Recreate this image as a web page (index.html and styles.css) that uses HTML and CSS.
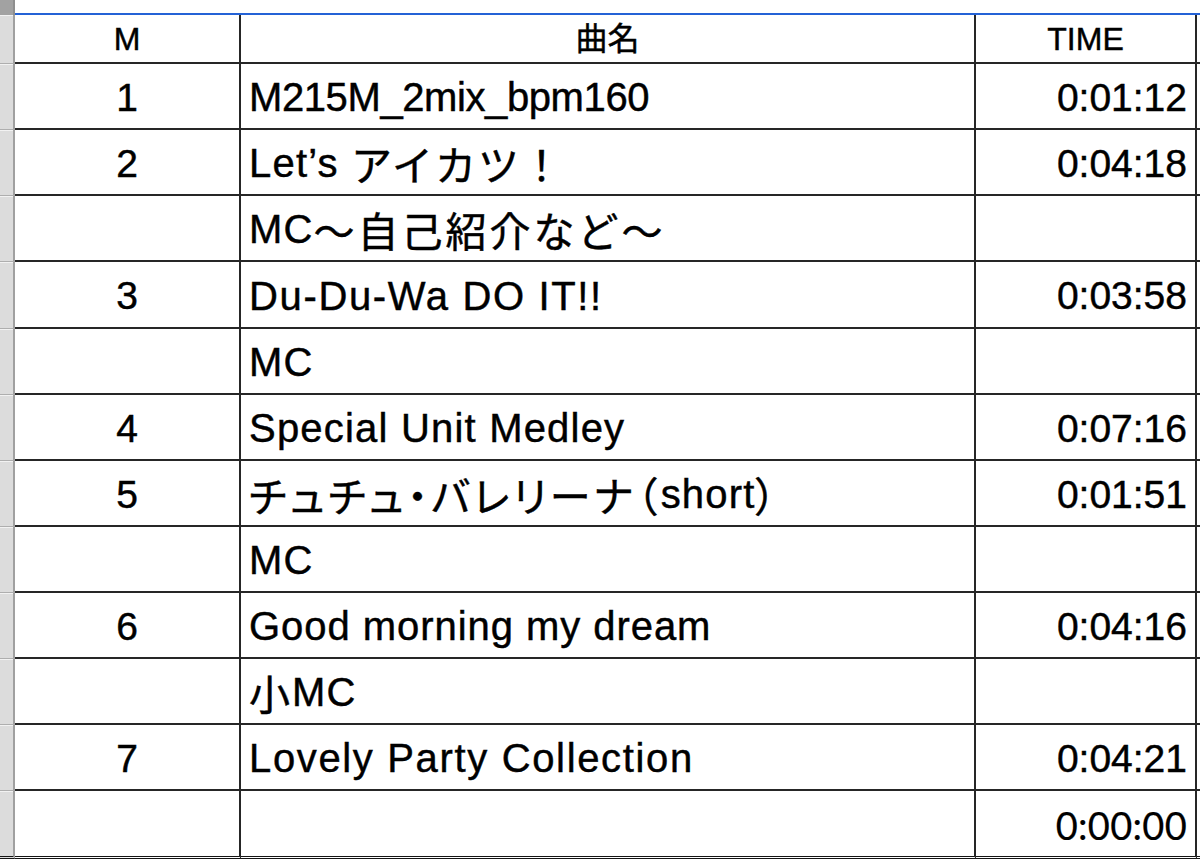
FILE: index.html
```html
<!DOCTYPE html>
<html lang="ja">
<head>
<meta charset="utf-8">
<title>Setlist</title>
<link rel="stylesheet" href="styles.css">
</head>
<body>
<div class="sheet">
  <div class="corner"></div><div class="top"></div><div class="top"></div><div class="top"></div><div class="top"></div>

  <div class="rh"></div><div class="c hd c1">M</div><div class="c hd c2">曲名</div><div class="c hd c3">TIME</div><div class="c c4"></div>

  <div class="rh"></div><div class="c c1 num">1</div><div class="c c2 name tight">M215M_2mix_bpm160</div><div class="c c3 time">0:01:12</div><div class="c c4"></div>
  <div class="rh"></div><div class="c c1 num">2</div><div class="c c2 name">Let’s <span class="ja">アイカツ！</span></div><div class="c c3 time">0:04:18</div><div class="c c4"></div>
  <div class="rh"></div><div class="c c1 num"></div><div class="c c2 name">MC<span class="ja wide">〜自己紹介など〜</span></div><div class="c c3 time"></div><div class="c c4"></div>
  <div class="rh"></div><div class="c c1 num">3</div><div class="c c2 name loose">Du-Du-Wa DO IT!!</div><div class="c c3 time">0:03:58</div><div class="c c4"></div>
  <div class="rh"></div><div class="c c1 num"></div><div class="c c2 name">MC</div><div class="c c3 time"></div><div class="c c4"></div>
  <div class="rh"></div><div class="c c1 num">4</div><div class="c c2 name">Special Unit Medley</div><div class="c c3 time">0:07:16</div><div class="c c4"></div>
  <div class="rh"></div><div class="c c1 num">5</div><div class="c c2 name"><span class="ja palt">チュチュ・バレリーナ（</span>short<span class="ja palt">）</span></div><div class="c c3 time">0:01:51</div><div class="c c4"></div>
  <div class="rh"></div><div class="c c1 num"></div><div class="c c2 name">MC</div><div class="c c3 time"></div><div class="c c4"></div>
  <div class="rh"></div><div class="c c1 num">6</div><div class="c c2 name snug">Good morning my dream</div><div class="c c3 time">0:04:16</div><div class="c c4"></div>
  <div class="rh"></div><div class="c c1 num"></div><div class="c c2 name"><span class="ja">小</span>MC</div><div class="c c3 time"></div><div class="c c4"></div>
  <div class="rh"></div><div class="c c1 num">7</div><div class="c c2 name loose">Lovely Party Collection</div><div class="c c3 time">0:04:21</div><div class="c c4"></div>
  <div class="rh last"></div><div class="c c1 num last"></div><div class="c c2 name last"></div><div class="c c3 time total last">0:00:00</div><div class="c c4 last"></div>
</div>
</body>
</html>
```

FILE: styles.css
```css
html, body {
  margin: 0;
  padding: 0;
  background: #ffffff;
}

body {
  width: 1200px;
  height: 860px;
  overflow: hidden;
  font-family: "Liberation Sans", "Noto Sans CJK JP", sans-serif;
  color: #000;
}

.sheet {
  display: grid;
  grid-template-columns: 15px 226px 735px 221px 3px;
  grid-template-rows: 15px 49px 66px 66px 66px 67px repeat(7, 66px) 68px;
  background: #ffffff;
}

.sheet > div {
  box-sizing: border-box;
}

.corner {
  background: #a2a2a2;
  border-right: 2px solid #8e8e8e;
}

.top {
  background: #ffffff;
  border-bottom: 2px solid #2462d6;
}

.rh {
  background: #dcdcdc;
  border-right: 2px solid #a0a0a0;
  border-bottom: 1px solid #aeaeae;
  box-shadow: inset 0 1px 0 #f2f2f2;
}

.c {
  display: flex;
  align-items: center;
  border-bottom: 2px solid #262626;
  line-height: 1;
  white-space: pre;
  overflow: hidden;
  -webkit-text-stroke: 0.45px #000;
}

.c1, .c2, .c3 {
  border-right: 2px solid #262626;
}

.c1 {
  justify-content: center;
}

.c2 {
  justify-content: flex-start;
  padding-left: 8px;
}

.c3 {
  justify-content: flex-end;
  padding-right: 8px;
}

.hd {
  font-size: 32px;
  padding-top: 1px;
}

.hd.c2 {
  justify-content: center;
  padding-left: 0;
  font-size: 32px;
}

.hd.c3 {
  justify-content: center;
  padding-right: 0;
}

.num {
  font-size: 39px;
  padding-top: 2px;
}

.name {
  font-size: 40px;
  padding-top: 2px;
  letter-spacing: 1.2px;
}

.name.tight {
  letter-spacing: -0.4px;
}

.name.snug {
  letter-spacing: 0.95px;
}

.name.loose {
  letter-spacing: 1.65px;
}

.ja {
  font-family: "Noto Sans CJK JP", sans-serif;
  font-size: 41px;
  letter-spacing: 2px;
}

.ja.wide {
  letter-spacing: 3px;
}

.ja.palt {
  font-feature-settings: "palt";
  letter-spacing: 3.5px;
}

.time {
  font-size: 39px;
  padding-top: 2px;
}

.total {
  font-family: "Lato", "Liberation Sans", sans-serif;
  font-size: 38px;
  letter-spacing: 0.3px;
  -webkit-text-stroke: 0.2px #000;
}

.last {
  border-bottom: 3px double #141414;
}

.rh.last {
  border-bottom: 3px double #141414;
}
```
